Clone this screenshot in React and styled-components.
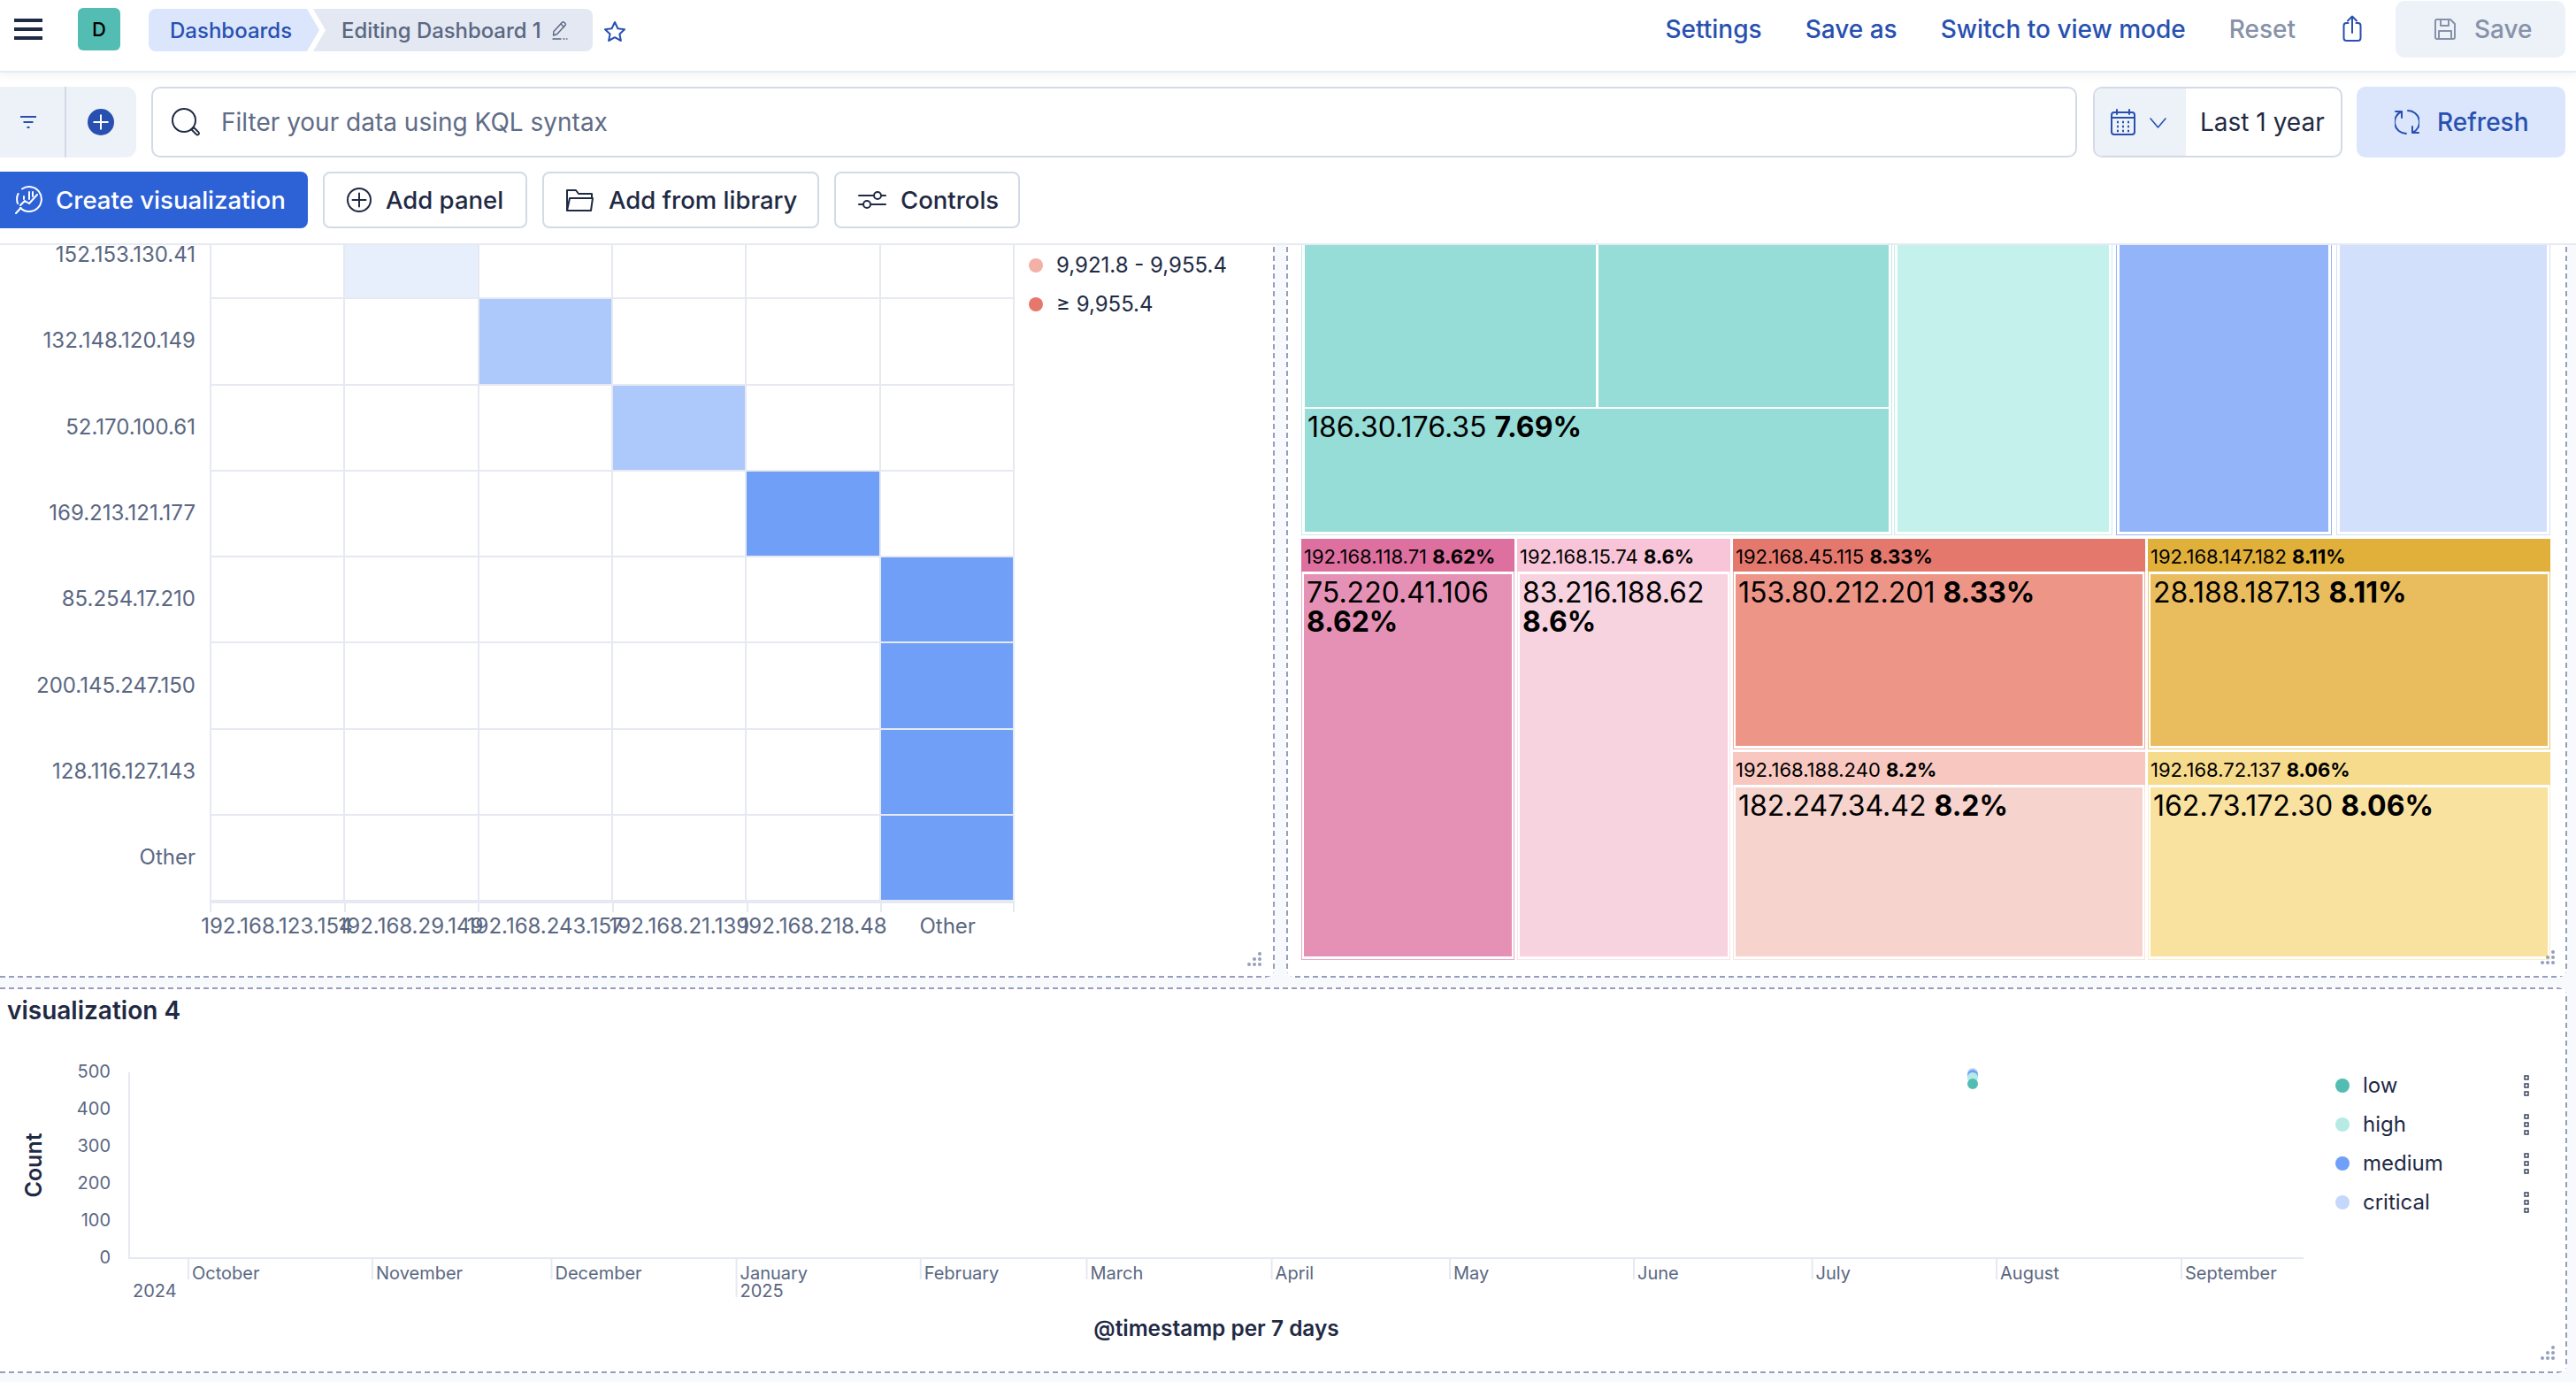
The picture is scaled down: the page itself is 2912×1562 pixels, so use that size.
import React from "react";
import styled, { createGlobalStyle, css } from "styled-components";

const Global = createGlobalStyle`
  html, body { margin: 0; padding: 0; background: #f8f9fd; }
  body { font-family: Inter, "Noto Sans", sans-serif; }
  * { box-sizing: border-box; }
`;

const DASH = "#94a0bb";
const dashLayers = {
  bottom: `repeating-linear-gradient(90deg, ${DASH} 0 6px, transparent 6px 10px) left bottom / 100% 2px no-repeat`,
  top: `repeating-linear-gradient(90deg, ${DASH} 0 6px, transparent 6px 10px) left top / 100% 2px no-repeat`,
  left: `repeating-linear-gradient(0deg, ${DASH} 0 6px, transparent 6px 10px) left top / 2px 100% no-repeat`,
  right: `repeating-linear-gradient(0deg, ${DASH} 0 6px, transparent 6px 10px) right top / 2px 100% no-repeat`,
};
const dashed = (...sides) => css`
  &::after {
    content: ""; position: absolute; inset: 0; pointer-events: none; border-radius: inherit;
    background: ${sides.map(s => dashLayers[s]).join(", ")};
  }
`;

const Page = styled.div`
  width: 2912px; height: 1562px; overflow: hidden; background: #f8f9fd; display: flex; flex-direction: column;
`;
const Header = styled.header`
  height: 82px; flex: none; background: #fff; border-bottom: 2px solid #e6eaf2; position: relative; z-index: 1;
  box-shadow: 0 3px 8px rgba(200, 208, 224, 0.25);
  display: flex; align-items: flex-start; padding-right: 12px;
`;
const Hamburger = styled.div`
  width: 32px; height: 24px; margin: 21px 0 0 16px; display: flex; flex-direction: column; justify-content: space-between;
  span { display: block; height: 4px; background: #1f2a44; }
`;
const Avatar = styled.div`
  width: 48px; height: 48px; margin: 9px 0 0 40px; border-radius: 6px; background: #54bdb3;
  display: flex; align-items: center; justify-content: center; color: #000; font-size: 22px; font-weight: 500;
`;
const Crumbs = styled.div`
  display: flex; margin: 10px 0 0 32px; height: 48px; width: 502px; font-size: 24px; font-weight: 500;
`;
const CrumbActive = styled.div`
  width: 193px; flex: none; background: #dbe6fc; color: #2850b0; padding-left: 24px; display: flex; align-items: center;
  border-radius: 8px 0 0 8px;
  clip-path: polygon(0 0, 179px 0, 193px 24px, 179px 48px, 0 48px);
`;
const CrumbCurrent = styled.div`
  flex: 1; margin-left: -7px; background: #e3e8f2; border-radius: 0 8px 8px 0;
  clip-path: polygon(0 0, 100% 0, 100% 100%, 0 100%, 14px 24px);
  color: #5a6782; display: flex; align-items: center; gap: 12px; padding-left: 32px; white-space: nowrap;
  font-size: 23.9px;
  svg { flex: none; }
`;
const StarWrap = styled.div` margin: 23px 0 0 12px; height: 24px; `;
const HeaderLinks = styled.nav`
  margin-left: auto; display: flex; align-items: flex-start;
`;
const HeaderLink = styled.span`
  font-size: 28px; font-weight: 500; color: ${p => (p.$muted ? "#8692a9" : "#2850b0")}; margin-right: ${p => p.$mr}px;
  line-height: 34px; margin-top: 16px; white-space: nowrap;
`;
const ShareWrap = styled.div` margin: 17px 38px 0 0; height: 30px; `;
const SaveButton = styled.div`
  width: 192px; height: 64px; margin-top: 1px; border-radius: 10px; background: #edf1f8; color: #8692a9;
  display: flex; align-items: center; gap: 21px; padding-left: 44px; font-size: 28px; font-weight: 500;
`;

const FilterRow = styled.div`
  background: #fff; height: 96px; flex: none; padding: 16px 12px 0 0; display: flex;
`;
const FilterAddons = styled.div`
  width: 154px; height: 80px; background: #edf1f8; border-radius: 0 12px 12px 0; display: flex; flex: none;
`;
const AddonCell = styled.div`
  display: flex; align-items: center; justify-content: center; height: 100%;
  width: ${p => p.$w}px; padding-right: ${p => p.$pr}px; border-left: ${p => (p.$line ? "2px solid #d3dae6" : "none")};
`;
const Search = styled.div`
  margin-left: 17px; width: 2177px; height: 80px; border: 2px solid #d3dae6; border-radius: 10px; display: flex; align-items: center;
  padding-left: 21px; gap: 24px; color: #5f6c86; font-size: 28px; flex: none;
`;
const DateBox = styled.div`
  margin-left: 18px; width: 282px; height: 80px; border: 2px solid #d3dae6; border-radius: 10px; display: flex; overflow: hidden; flex: none;
`;
const DateIcons = styled.div`
  width: 103px; background: #edf1f8; display: flex; align-items: center; padding-left: 18px; gap: 16px; flex: none;
`;
const DateText = styled.div`
  padding-left: 16px; display: flex; align-items: center; font-size: 28px; color: #1f2a44; white-space: nowrap;
`;
const Refresh = styled.div`
  margin-left: 16px; width: 236px; height: 80px; border-radius: 10px; background: #dbe6fc; color: #2850b0;
  display: flex; align-items: center; padding-left: 43px; gap: 20px; font-size: 28px; font-weight: 500; flex: none;
`;

const Toolbar = styled.div`
  background: #fff; height: 99px; flex: none; padding-top: 16px; display: flex; gap: 17px; border-bottom: 2px solid #e6eaf2;
`;
const PrimaryBtn = styled.div`
  width: 348px; height: 64px; background: #2d61d6; color: #fff; border-radius: 0 8px 8px 0; display: flex; align-items: center;
  padding-left: 17px; gap: 14px; font-size: 27.6px; font-weight: 500;
`;
const OutlineBtn = styled.div`
  height: 64px; width: ${p => p.$w}px; border: 2px solid #d3dae6; border-radius: 8px; background: #fff; color: #1f2a44;
  display: flex; align-items: center; padding-left: 25px; gap: 16px; font-size: 27.5px; font-weight: 500;
`;

const Board = styled.main`
  flex: 1; display: flex; flex-direction: column; min-height: 0; overflow: hidden;
`;
const TopPanels = styled.div`
  height: 828px; flex: none; display: flex; gap: 13px; padding-right: 10px;
`;
const HeatPanel = styled.section`
  width: 1441px; flex: none; background: #fff; border-radius: 0 0 10px 0;
  position: relative; overflow: hidden;
  ${dashed("bottom", "right")}
`;
const HeatBody = styled.div`
  margin-top: -36px; display: flex;
`;
const YLabels = styled.div`
  width: 237px; flex: none; display: flex; flex-direction: column;
`;
const YLabel = styled.div`
  height: 97.3px; padding: 0 16px 4px 0; display: flex; align-items: center; justify-content: flex-end;
  font-size: 24px; color: #5a6782;
`;
const HeatGrid = styled.div`
  width: 910px; flex: none; display: grid; grid-template-columns: repeat(6, 1fr); grid-auto-rows: 97.3px;
  border-bottom: 2px solid #e6e9f2; border-left: 2px solid #e6e9f2;
`;
const HeatCell = styled.div`
  background: ${p => p.$c || "#fff"}; border-right: 2px solid #e6e9f2; border-bottom: 2px solid #e6e9f2;
`;
const HeatLegend = styled.div`
  padding: 44px 0 0 16px; display: flex; flex-direction: column; gap: 15px;
`;
const LegendRow = styled.div`
  display: flex; align-items: center; gap: 15px; font-size: 24px; color: #1f2a44; height: 29px; white-space: nowrap;
`;
const LegendDot = styled.span`
  width: 16px; height: 16px; border-radius: 50%; background: ${p => p.$c}; flex: none;
`;
const XLabels = styled.div`
  margin-left: 237px; width: 910px; display: grid; grid-template-columns: repeat(6, minmax(0, 1fr));
`;
const XLabel = styled.div`
  position: relative; display: flex; justify-content: center; font-size: 24px; color: #5a6782; white-space: nowrap; padding-top: 11px;
  span { display: block; line-height: 29px; flex: none; }
  &::before { content: ""; position: absolute; left: 0; top: 0; width: 2px; height: 10px; background: #e6e9f2; }
  ${p => p.$last && css`
    &::after { content: ""; position: absolute; right: 0; top: 0; width: 2px; height: 10px; background: #e6e9f2; }
  `}
`;
const Handle = styled.svg`
  position: absolute; right: ${p => p.$r}px; bottom: ${p => p.$b}px;
`;

const TreePanel = styled.section`
  flex: 1; background: #fff; border-radius: 0 0 10px 10px; position: relative;
  padding: 0 19px 20px 17px; display: flex; flex-direction: column; gap: 4px; overflow: hidden;
  ${dashed("bottom", "left", "right")}
`;
const TreeTop = styled.div`
  height: 328px; flex: none; display: flex;
`;
const Group = styled.div`
  width: ${p => p.$w}px; margin-left: ${p => p.$ml || 0}px; flex: none; border: 1px solid ${p => p.$line || p.$c}; border-top: none;
  padding: 0 3px 3px; background: #fff; display: flex; flex-direction: column;
`;
const SolidCell = styled.div`
  background: ${p => p.$c}; flex: 1;
`;
const Split = styled.div`
  display: flex; gap: 3px; height: 183px; flex: none; margin-bottom: 2px;
`;
const Big = styled.div`
  font-size: 32px; line-height: 33px; color: #000; padding: 4px 3px;
  b { font-weight: 700; }
`;
const TreeBottom = styled.div`
  flex: 1; display: flex; gap: 3px; min-height: 0;
`;
const TreeCol = styled.div`
  width: ${p => p.$w}px; flex: none; display: flex; flex-direction: column; gap: 3px;
`;
const Tile = styled.div`
  flex: ${p => (p.$h ? "none" : 1)}; height: ${p => (p.$h ? p.$h + "px" : "auto")}; display: flex; flex-direction: column; background: #fff;
  border: 1px solid ${p => p.$edge}; border-top: none;
`;
const TileHead = styled.div`
  height: 37px; flex: none; background: ${p => p.$head}; font-size: 22px; line-height: 37px; padding: 2px 0 0 3px; color: #000; white-space: nowrap; margin: 0 -1px;
  b { font-weight: 700; }
`;
const TileBody = styled.div`
  flex: 1; margin: 3px 2px 3px; background: ${p => p.$c};
`;

const BottomPanel = styled.section`
  margin-top: 11px; height: 436px; flex: none; width: 2902px; background: #fff; border-radius: 0 10px 10px 0; padding-top: 2px;
  position: relative; display: flex; flex-direction: column; overflow: hidden;
  ${dashed("top", "right", "bottom")}
`;
const PanelTitle = styled.h3`
  margin: 0; padding: 7px 0 0 8px; font-size: 28px; font-weight: 600; color: #1f2a44; line-height: 34px; height: 58px; flex: none;
`;
const ChartRow = styled.div`
  flex: 1; display: flex; min-height: 0;
`;
const ChartSvg = styled.svg`
  flex: none;
`;
const LegendCol = styled.div`
  flex: 1; padding: 36px 0 0 36px; display: flex; flex-direction: column; gap: 15px;
`;
const SeriesRow = styled.div`
  display: flex; align-items: center; height: 29px; font-size: 24px; color: #1f2a44;
  span:nth-child(2) { margin-left: 15px; }
`;
const ThreeDots = styled.svg`
  margin-left: auto; margin-right: 43px;
`;
const AxisText = styled.text`
  font-family: Inter, sans-serif; font-size: 20px; fill: #5a6782;
`;
const AxisTitle = styled.text`
  font-family: Inter, sans-serif; font-weight: 600; fill: #1f2a44; font-size: ${p => p.$s}px;
`;

const Icon = ({ w = 28, h = 28, vb, sw = 2, c = "currentColor", children }) => (
  <svg width={w} height={h} viewBox={vb || `0 0 ${w} ${h}`} fill="none" stroke={c} strokeWidth={sw} strokeLinecap="round" strokeLinejoin="round">{children}</svg>
);

const rows = ["152.153.130.41", "132.148.120.149", "52.170.100.61", "169.213.121.177", "85.254.17.210", "200.145.247.150", "128.116.127.143", "Other"];
const cols = ["192.168.123.154", "192.168.29.149", "192.168.243.157", "192.168.21.139", "192.168.218.48", "Other"];
const heatColors = { "0-1": "#e8effc", "1-2": "#adc8fb", "2-3": "#adc8fb", "3-4": "#6f9ff7", "4-5": "#6f9ff7", "5-5": "#6f9ff7", "6-5": "#6f9ff7", "7-5": "#6f9ff7" };

const months = [[213, "October"], [421, "November"], [623.5, "December"], [832.5, "January", "2025"], [1040.7, "February"], [1228.5, "March"], [1437.6, "April"], [1639, "May"], [1847, "June"], [2048.6, "July"], [2257, "August"], [2466, "September"]];
const yTicks = [[500, 1211], [400, 1253], [300, 1295], [200, 1337], [100, 1379], [0, 1421]];
const series = [["low", "#54bdb3"], ["high", "#b5ebe4"], ["medium", "#6f9ff7"], ["critical", "#c4d8fc"]];

const ResizeGrip = ({ r, b }) => (
  <Handle $r={r} $b={b} width="16" height="16" viewBox="0 0 16 16" fill="#94a0bb">
    <circle cx="14" cy="2" r="2" /><circle cx="14" cy="8" r="2" /><circle cx="8" cy="8" r="2" />
    <circle cx="14" cy="14" r="2" /><circle cx="8" cy="14" r="2" /><circle cx="2" cy="14" r="2" />
  </Handle>
);

const LowerTile = ({ head, edge, body, sub, pct, big, bigPct, stack, h }) => (
  <Tile $edge={edge || head} $h={h}>
    <TileHead $head={head}>{sub} <b>{pct}</b></TileHead>
    <TileBody $c={body}>
      <Big>{big}{stack ? <br /> : " "}<b>{bigPct}</b></Big>
    </TileBody>
  </Tile>
);

export default function App() {
  return (
    <Page>
      <Global />
      <Header>
        <Hamburger><span /><span /><span /></Hamburger>
        <Avatar>D</Avatar>
        <Crumbs>
          <CrumbActive>Dashboards</CrumbActive>
          <CrumbCurrent>
            Editing Dashboard 1
            <Icon w={18} h={22} c="#5a6782" sw={1.4}>
              <path d="M2 12.500L11.500 2.200a1.500 1.500 0 0 1 2.200 0l1.300 1.200a1.500 1.500 0 0 1 0 2.200L5.800 15.500 1.500 17z" /><path d="M10 4l3.500 3.500" />
              <path d="M1 21h9M13 21h1M16.500 21h.5" />
            </Icon>
          </CrumbCurrent>
        </Crumbs>
        <StarWrap>
          <Icon w={26} h={24} c="#2850b0">
            <path d="M13 2l3.400 7.200 7.600 1-5.600 5.300 1.500 7.500-6.900-3.800-6.900 3.800 1.500-7.500L2 10.200l7.600-1z" />
          </Icon>
        </StarWrap>
        <HeaderLinks>
          <HeaderLink $mr={49}>Settings</HeaderLink>
          <HeaderLink $mr={49}>Save as</HeaderLink>
          <HeaderLink $mr={49}>Switch to view mode</HeaderLink>
          <HeaderLink $mr={53} $muted>Reset</HeaderLink>
          <ShareWrap>
            <Icon w={22} h={30} c="#2850b0">
              <path d="M6.500 9H4.500a3 3 0 0 0-3 3v14a3 3 0 0 0 3 3h13a3 3 0 0 0 3-3V12a3 3 0 0 0-3-3h-2" /><path d="M11 20V1.500M6 6.500l5-5 5 5" />
            </Icon>
          </ShareWrap>
          <SaveButton>
            <Icon w={24} h={24} c="#8692a9">
              <path d="M3 1h15l5 5v15a2 2 0 0 1-2 2H3a2 2 0 0 1-2-2V3a2 2 0 0 1 2-2z" /><path d="M7 1v7h9V1M5 23v-9h14v9" />
            </Icon>
            Save
          </SaveButton>
        </HeaderLinks>
      </Header>

      <FilterRow>
        <FilterAddons>
          <AddonCell $w={73} $pr={9}>
            <Icon w={20} h={14} c="#2850b0"><path d="M1 1h18M4.500 7h11M8.500 13h3" strokeLinecap="butt" /></Icon>
          </AddonCell>
          <AddonCell $w={81} $pr={2} $line>
            <svg width="30" height="30" viewBox="0 0 30 30"><circle cx="15" cy="15" r="15" fill="#2850b0" /><path d="M15 6.500v17M6.500 15h17" stroke="#fff" strokeWidth="2" /></svg>
          </AddonCell>
        </FilterAddons>
        <Search>
          <Icon w={32} h={32} c="#1f2a44">
            <circle cx="14" cy="14" r="13" /><path d="M22.500 24.500l2.500-2.500 5.500 5.500a1.770 1.770 0 0 1-2.500 2.500z" strokeWidth="1.800" />
          </Icon>
          Filter your data using KQL syntax
        </Search>
        <DateBox>
          <DateIcons>
            <Icon w={28} h={30} c="#2850b0">
              <rect x="1" y="4" width="26" height="25" rx="3" /><path d="M1 10h26M7 1v5M21 1v5" />
              <path d="M7 15h2M13 15h2M19 15h2M7 20h2M13 20h2M19 20h2M7 25h2M13 25h2M19 25h2" strokeWidth="2.500" strokeLinecap="butt" />
            </Icon>
            <Icon w={19} h={19} c="#2850b0" sw={1.6}><path d="M1 5l8.500 10L18 5" /></Icon>
          </DateIcons>
          <DateText>Last 1 year</DateText>
        </DateBox>
        <Refresh>
          <Icon w={28} h={28} c="#2850b0">
            <path d="M15 1a13 13 0 0 1 5 25M20 19v7h7" />
            <path d="M13 27A13 13 0 0 1 8 2M8 9V2H1" />
          </Icon>
          Refresh
        </Refresh>
      </FilterRow>

      <Toolbar>
        <PrimaryBtn>
          <Icon w={32} h={32} c="#fff">
            <path d="M8 3.500A14 14 0 1 1 6 25M3.500 9A14 14 0 0 0 3 20" />
            <path d="M1 31l5.500-6M6 22l5-5 5 3 9-10M10 12v3M16 7v8M20 7v5" />
          </Icon>
          Create visualization
        </PrimaryBtn>
        <OutlineBtn $w={231}>
          <Icon w={28} h={28} c="#1f2a44"><circle cx="14" cy="14" r="13" /><path d="M14 6.500v15M6.500 14h15" /></Icon>
          Add panel
        </OutlineBtn>
        <OutlineBtn $w={313}>
          <Icon w={32} h={26} c="#1f2a44"><path d="M1 25V2h10l3 4h15v5M1 25h27l2-14H4z" /></Icon>
          Add from library
        </OutlineBtn>
        <OutlineBtn $w={210}>
          <Icon w={32} h={24} c="#1f2a44">
            <path d="M1 7h16M27 7h4M1 17h4M15 17h16" /><circle cx="22" cy="7" r="4" /><circle cx="10" cy="17" r="4" />
          </Icon>
          Controls
        </OutlineBtn>
      </Toolbar>

      <Board>
        <TopPanels>
          <HeatPanel>
            <HeatBody>
              <YLabels>{rows.map(r => <YLabel key={r}>{r}</YLabel>)}</YLabels>
              <HeatGrid>
                {rows.flatMap((r, i) => cols.map((c, j) => <HeatCell key={r + c} $c={heatColors[`${i}-${j}`]} />))}
              </HeatGrid>
              <HeatLegend>
                <LegendRow><LegendDot $c="#f2b0a6" />9,921.8 - 9,955.4</LegendRow>
                <LegendRow><LegendDot $c="#e7776b" />≥ 9,955.4</LegendRow>
              </HeatLegend>
            </HeatBody>
            <XLabels>
              {cols.map((c, i) => <XLabel key={c} $last={i === cols.length - 1}><span>{c}</span></XLabel>)}
            </XLabels>
            <ResizeGrip r={15} b={13} />
          </HeatPanel>
          <TreePanel>
            <TreeTop>
              <Group $w={668} $c="#c6ece8">
                <Split>
                  <SolidCell $c="#96ddd7" />
                  <SolidCell $c="#96ddd7" />
                </Split>
                <SolidCell $c="#96ddd7"><Big>186.30.176.35 <b>7.69%</b></Big></SolidCell>
              </Group>
              <Group $ml={2} $w={247} $c="#c5f1ec"><SolidCell $c="#c5f1ec" /></Group>
              <Group $ml={4} $w={244} $c="#94b4fa"><SolidCell $c="#94b4fa" /></Group>
              <Group $ml={5} $w={242} $c="#d2e0fc"><SolidCell $c="#d2e0fc" /></Group>
            </TreeTop>
            <TreeBottom>
              <TreeCol $w={241}>
                <LowerTile head="#de70a0" edge="#eba9c6" body="#e591b5" sub="192.168.118.71" pct="8.62%" big="75.220.41.106" bigPct="8.62%" stack />
              </TreeCol>
              <TreeCol $w={241}>
                <LowerTile head="#f8c5d8" edge="#fbe3ec" body="#f7d2df" sub="192.168.15.74" pct="8.6%" big="83.216.188.62" bigPct="8.6%" stack />
              </TreeCol>
              <TreeCol $w={466}>
                <LowerTile h={238} head="#e5786d" edge="#f0b0a8" body="#ed9688" sub="192.168.45.115" pct="8.33%" big="153.80.212.201" bigPct="8.33%" />
                <LowerTile head="#f7c7c0" edge="#fbe3df" body="#f6d3cd" sub="192.168.188.240" pct="8.2%" big="182.247.34.42" bigPct="8.2%" />
              </TreeCol>
              <TreeCol $w={455}>
                <LowerTile h={238} head="#e0b03a" edge="#ebc867" body="#e9bd5e" sub="192.168.147.182" pct="8.11%" big="28.188.187.13" bigPct="8.11%" />
                <LowerTile head="#f7db8c" edge="#fbeec6" body="#f9e1a0" sub="192.168.72.137" pct="8.06%" big="162.73.172.30" bigPct="8.06%" />
              </TreeCol>
            </TreeBottom>
            <ResizeGrip r={14} b={15} />
          </TreePanel>
        </TopPanels>
        <BottomPanel>
          <PanelTitle>visualization 4</PanelTitle>
          <ChartRow>
            <ChartSvg width="2604" height="374" viewBox="0 1176 2604 374">
              <AxisTitle $s={25} x="0" y="0" transform="translate(47 1317) rotate(-90)" textAnchor="middle">Count</AxisTitle>
              {yTicks.map(([v, y]) => <AxisText key={v} x="125" y={y + 7} textAnchor="end">{v}</AxisText>)}
              <line x1="146" y1="1212" x2="146" y2="1423" stroke="#e6e9f2" strokeWidth="2" />
              <line x1="146" y1="1422" x2="2604" y2="1422" stroke="#e3e8f2" strokeWidth="2" />
              {months.map(([x, m, yr]) => (
                <g key={m}>
                  <line x1={x} y1="1422" x2={x} y2={yr ? 1466 : 1446} stroke="#e6e9f2" strokeWidth="2" />
                  <AxisText x={x + 4} y="1446">{m}</AxisText>
                  {yr && <AxisText x={x + 4} y="1466">{yr}</AxisText>}
                </g>
              ))}
              <AxisText x="150" y="1466">2024</AxisText>
              <AxisTitle $s={24.4} x="1375" y="1510" textAnchor="middle">@timestamp per 7 days</AxisTitle>
              <circle cx="2230" cy="1213" r="6" fill="#c4d8fc" />
              <circle cx="2230" cy="1215" r="6" fill="#6f9ff7" />
              <circle cx="2230" cy="1218" r="6" fill="#b5ebe4" />
              <circle cx="2230" cy="1225" r="6" fill="#54bdb3" />
            </ChartSvg>
            <LegendCol>
              {series.map(([n, c]) => (
                <SeriesRow key={n}>
                  <LegendDot $c={c} /><span>{n}</span>
                  <ThreeDots width="6" height="24" viewBox="0 0 6 24" fill="none" stroke="#3a4560" strokeWidth="1.500">
                    <rect x="1" y="1" width="4" height="4" /><rect x="1" y="10" width="4" height="4" /><rect x="1" y="19" width="4" height="4" />
                  </ThreeDots>
                </SeriesRow>
              ))}
            </LegendCol>
          </ChartRow>
          <ResizeGrip r={14} b={15} />
        </BottomPanel>
      </Board>
    </Page>
  );
}
